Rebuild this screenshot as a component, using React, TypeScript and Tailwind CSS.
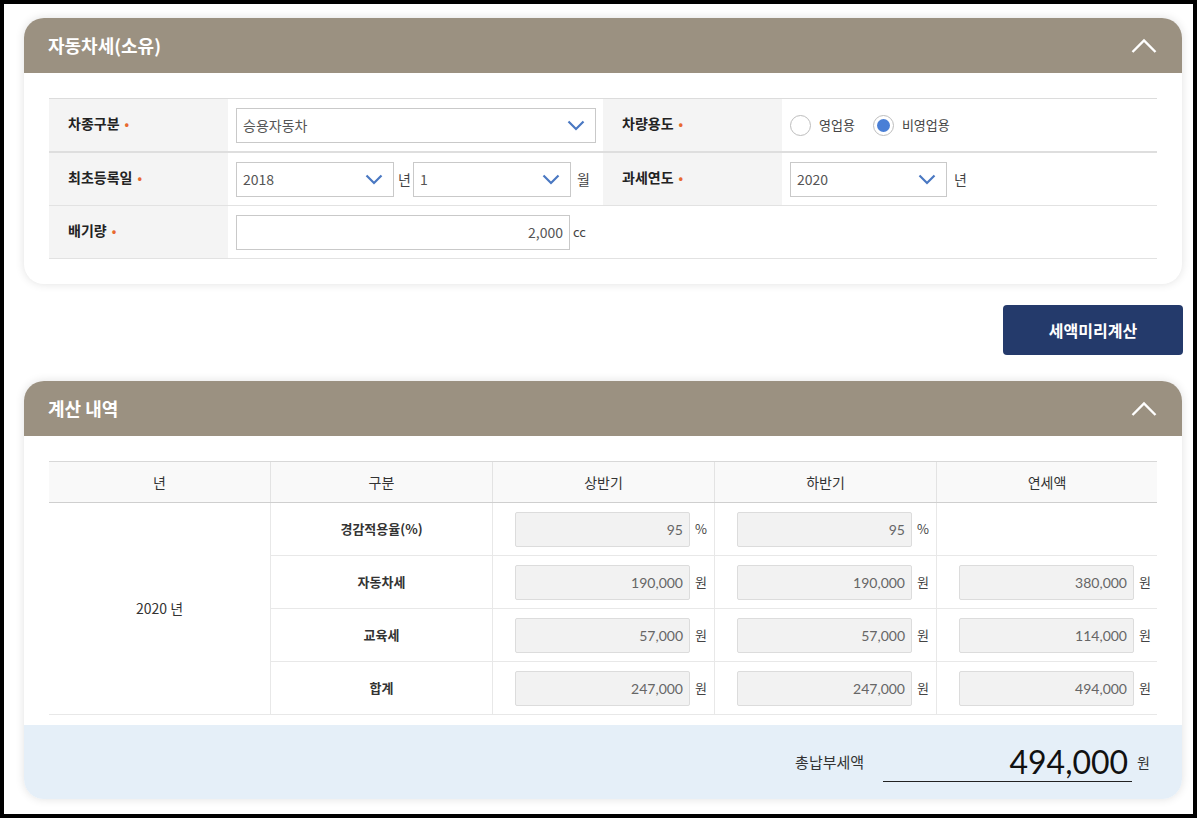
import React from "react";

const KR = "font-['Noto_Sans_CJK_KR','Noto_Sans',sans-serif]";

function Chevron({ className = "" }: { className?: string }) {
  return (
    <svg width="18" height="11" viewBox="0 0 18 11" className={className}>
      <path d="M1.5 1.5 L9 9 L16.5 1.5" fill="none" stroke="#4a78c2" strokeWidth="2.2" />
    </svg>
  );
}

function UpChevron() {
  return (
    <svg width="26" height="16" viewBox="0 0 26 16">
      <path d="M1.5 14 L13 2.5 L24.5 14" fill="none" stroke="#ffffff" strokeWidth="2.4" />
    </svg>
  );
}

function Select({ value, w }: { value: string; w: string }) {
  return (
    <div className={`${w} h-[35px] border border-[#c9c9c9] bg-white flex items-center justify-between pl-[6px] pr-[10px]`}>
      <span className="text-[14px] text-[#555]">{value}</span>
      <Chevron />
    </div>
  );
}

function Label({ text }: { text: string }) {
  return (
    <div className="bg-[#f4f4f4] flex items-center pl-[19px] pb-[3px] text-[14px] font-bold text-[#222]">
      {text}
      <span className="text-[#e8692f] ml-[5px] text-[12px]">•</span>
    </div>
  );
}

function Header({ title }: { title: string }) {
  return (
    <div className="h-[55px] bg-[#9b9181] rounded-t-[20px] flex items-center justify-between pl-[24px] pr-[25px]">
      <span className="text-white text-[18px] font-bold">{title}</span>
      <UpChevron />
    </div>
  );
}

function Val({ v, unit }: { v?: string; unit?: string }) {
  if (!v) return <div />;
  return (
    <div className="flex items-center pl-[22px] gap-[5px] border-r border-[#e8e8e8] last:border-r-0">
      <div className="w-[175px] h-[35px] bg-[#f2f2f2] border border-[#dcdcdc] rounded-[2px] flex items-center justify-end pr-[6px] text-[14px] text-[#666] font-['Lato',sans-serif]">
        {v}
      </div>
      <span className="text-[13px] text-[#444]">{unit}</span>
    </div>
  );
}

export default function App() {
  const rows = [
    { name: "경감적용율(%)", a: "95", b: "95", c: "", unit: "%" },
    { name: "자동차세", a: "190,000", b: "190,000", c: "380,000", unit: "원" },
    { name: "교육세", a: "57,000", b: "57,000", c: "114,000", unit: "원" },
    { name: "합계", a: "247,000", b: "247,000", c: "494,000", unit: "원" },
  ];
  return (
    <div className={`w-[1197px] h-[818px] border-4 border-black bg-white pl-[20px] pr-[11px] pt-[14px] ${KR}`}>
      {/* Card 1 */}
      <div className="rounded-[20px] bg-white shadow-[0_0_10px_rgba(0,0,0,0.12)]">
        <Header title="자동차세(소유)" />
        <div className="px-[25px] pt-[25px] pb-[25px]">
          <div className="border-t border-[#dcdcdc]">
            <div className="grid grid-cols-[179px_375px_179px_1fr] h-[54px] border-b-2 border-[#dedede]">
              <Label text="차종구분" />
              <div className="flex items-center pl-[8px]">
                <Select value="승용자동차" w="w-[360px]" />
              </div>
              <Label text="차량용도" />
              <div className="flex items-center pl-[8px] text-[13px] text-[#444]">
                <span className="w-[21px] h-[21px] rounded-full border border-[#bdbdbd] bg-white" />
                <span className="ml-[8px]">영업용</span>
                <span className="ml-[18px] w-[21px] h-[21px] rounded-full border border-[#bdbdbd] bg-white flex items-center justify-center">
                  <span className="w-[13px] h-[13px] rounded-full bg-[#4a7fd6]" />
                </span>
                <span className="ml-[8px]">비영업용</span>
              </div>
            </div>
            <div className="grid grid-cols-[179px_375px_179px_1fr] h-[53px] border-b border-[#e2e2e2]">
              <Label text="최초등록일" />
              <div className="flex items-center pl-[8px] text-[14px] text-[#444]">
                <Select value="2018" w="w-[158px]" />
                <span className="ml-[4px] mr-[2px]">년</span>
                <Select value="1" w="w-[158px]" />
                <span className="ml-[6px]">월</span>
              </div>
              <Label text="과세연도" />
              <div className="flex items-center pl-[8px] text-[14px] text-[#444]">
                <Select value="2020" w="w-[157px]" />
                <span className="ml-[7px]">년</span>
              </div>
            </div>
            <div className="grid grid-cols-[179px_1fr] h-[53px] border-b border-[#e2e2e2]">
              <Label text="배기량" />
              <div className="flex items-center pl-[8px] text-[14px] text-[#444]">
                <div className="w-[334px] h-[35px] border border-[#c9c9c9] bg-white flex items-center justify-end pr-[6px] text-[#555]">
                  2,000
                </div>
                <span className="ml-[3px] text-[13px]">cc</span>
              </div>
            </div>
          </div>
        </div>
      </div>

      {/* Button */}
      <div className="flex justify-end mt-[21px] mr-[-1px]">
        <button className="w-[180px] h-[50px] bg-[#243a6b] rounded-[4px] text-white text-[16px] font-bold">
          세액미리계산
        </button>
      </div>

      {/* Card 2 */}
      <div className="mt-[26px] rounded-[20px] bg-white shadow-[0_0_10px_rgba(0,0,0,0.12)]">
        <Header title="계산 내역" />
        <div className="px-[25px] pt-[25px]">
          <div className="grid grid-cols-[222px_222px_222px_222px_1fr] h-[42px] bg-[#f9f9f9] border-t border-[#d8d8d8] border-b border-b-[#cfcfcf] text-[14px] text-[#333]">
            {["년", "구분", "상반기", "하반기", "연세액"].map((h, i) => (
              <div key={h} className={`flex items-center justify-center ${i < 4 ? "border-r border-[#e3e3e3]" : ""}`}>
                {h}
              </div>
            ))}
          </div>
          <div className="grid grid-cols-[222px_1fr]">
            <div className="flex items-center justify-center border-r border-[#e8e8e8] border-b border-[#e8e8e8] text-[14px] text-[#333]">
              2020 년
            </div>
            <div>
              {rows.map((r) => (
                <div key={r.name} className="grid grid-cols-[222px_222px_222px_1fr] h-[53px] border-b border-[#e8e8e8]">
                  <div className="flex items-center justify-center border-r border-[#e8e8e8] text-[13px] font-bold text-[#333]">
                    {r.name}
                  </div>
                  <Val v={r.a} unit={r.unit} />
                  <Val v={r.b} unit={r.unit} />
                  <Val v={r.c} unit={r.unit} />
                </div>
              ))}
            </div>
          </div>
        </div>
        <div className="mt-[10px] h-[74px] bg-[#e5eff8] rounded-b-[20px] flex items-center justify-end pr-[32px]">
          <span className="text-[15px] text-[#333] mr-[19px]">총납부세액</span>
          <div className="w-[249px] border-b border-[#222] flex justify-end pr-[4px] text-[32px] leading-[38px] text-[#111] font-['Lato',sans-serif]">
            494,000
          </div>
          <span className="ml-[5px] text-[14px] text-[#333]">원</span>
        </div>
      </div>
    </div>
  );
}
